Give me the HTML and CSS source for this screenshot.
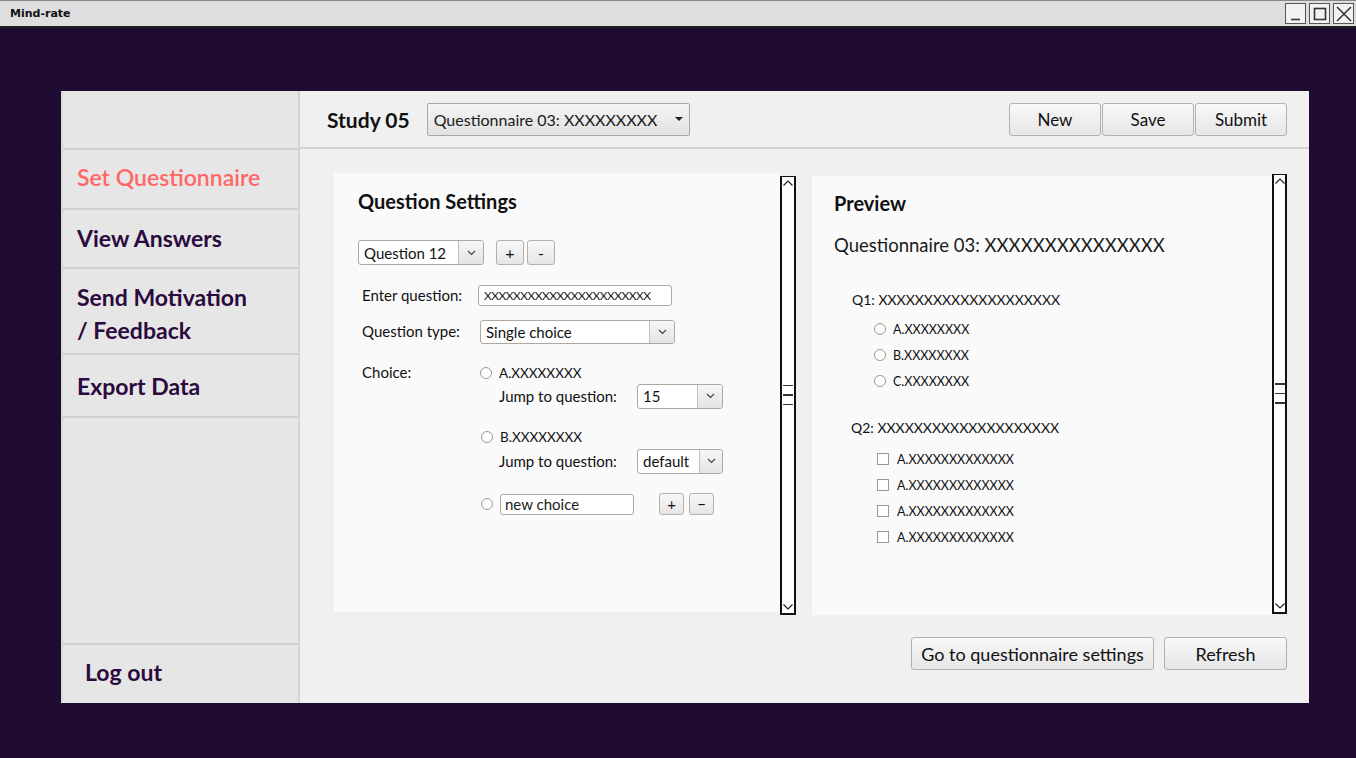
FILE: index.html
```html
<!DOCTYPE html>
<html>
<head>
<meta charset="utf-8">
<link rel="stylesheet" href="styles.css">
</head>
<body>
<div class="titlebar">
  <span class="app-name">Mind-rate</span>
  <div class="win-btns">
    <span class="win-btn"><svg width="18" height="18" viewBox="0 0 18 18"><path d="M4 14.5h9" stroke="#333" stroke-width="1.6" fill="none"/></svg></span>
    <span class="win-btn"><svg width="18" height="18" viewBox="0 0 18 18"><rect x="3.5" y="3.5" width="11" height="11" stroke="#333" stroke-width="1.6" fill="none"/></svg></span>
    <span class="win-btn"><svg width="18" height="18" viewBox="0 0 18 18"><path d="M2 2L16 16M16 2L2 16" stroke="#333" stroke-width="1.5" fill="none"/></svg></span>
  </div>
</div>
<div class="desktop">
  <div class="window">
    <aside class="sidebar">
      <div class="side-head"></div>
      <div class="side-item active">Set Questionnaire</div>
      <div class="side-item">View Answers</div>
      <div class="side-item tall">Send Motivation<br>/ Feedback</div>
      <div class="side-item export">Export Data</div>
      <div class="side-spacer"></div>
      <div class="side-item logout">Log out</div>
    </aside>
    <main class="main">
      <header class="main-head">
        <span class="study">Study 05</span>
        <div class="combo big">
          <span>Questionnaire 03: XXXXXXXXX</span>
          <svg class="tri" width="8" height="5" viewBox="0 0 8 5"><path d="M0 0h8L4 4z" fill="#222"/></svg>
        </div>
        <div class="head-actions">
          <button class="btn top">New</button>
          <button class="btn top">Save</button>
          <button class="btn top">Submit</button>
        </div>
      </header>
      <section class="content">
        <div class="panes">
          <div class="pane-wrap left">
            <div class="pane settings">
              <h2 class="pane-title">Question Settings</h2>
              <div class="row qsel">
                <div class="select w126">
                  <span class="sel-val">Question 12</span>
                  <span class="sel-arrow"><svg width="9" height="6" viewBox="0 0 9 6"><path d="M1 1l3.5 3.5L8 1" stroke="#444" stroke-width="1.2" fill="none"/></svg></span>
                </div>
                <button class="btn sq">+</button>
                <button class="btn sq">-</button>
              </div>
              <div class="form">
                <div class="lbl l-enter">Enter question:</div>
                <div class="f-enter"><div class="input w194 xs">XXXXXXXXXXXXXXXXXXXXXXX</div></div>
                <div class="lbl l-type">Question type:</div>
                <div class="f-type">
                  <div class="select w195 h24">
                    <span class="sel-val">Single choice</span>
                    <span class="sel-arrow"><svg width="9" height="6" viewBox="0 0 9 6"><path d="M1 1l3.5 3.5L8 1" stroke="#444" stroke-width="1.2" fill="none"/></svg></span>
                  </div>
                </div>
                <div class="lbl l-choice">Choice:</div>
                <div class="choices">
                  <div class="opt"><span class="radio"></span><span class="opt-text">A.XXXXXXXX</span></div>
                  <div class="jump j1">
                    <span class="jump-lbl">Jump to question:</span>
                    <div class="select w86">
                      <span class="sel-val">15</span>
                      <span class="sel-arrow"><svg width="9" height="6" viewBox="0 0 9 6"><path d="M1 1l3.5 3.5L8 1" stroke="#444" stroke-width="1.2" fill="none"/></svg></span>
                    </div>
                  </div>
                  <div class="opt b"><span class="radio"></span><span class="opt-text">B.XXXXXXXX</span></div>
                  <div class="jump j2">
                    <span class="jump-lbl">Jump to question:</span>
                    <div class="select w86">
                      <span class="sel-val">default</span>
                      <span class="sel-arrow narrow"><svg width="9" height="6" viewBox="0 0 9 6"><path d="M1 1l3.5 3.5L8 1" stroke="#444" stroke-width="1.2" fill="none"/></svg></span>
                    </div>
                  </div>
                  <div class="opt new">
                    <span class="radio"></span>
                    <div class="input w134">new choice</div>
                    <button class="btn sm">+</button>
                    <button class="btn sm">−</button>
                  </div>
                </div>
              </div>
            </div>
            <div class="scroll l">
              <svg class="sc-up" width="12" height="8" viewBox="0 0 12 8"><path d="M1.5 6.5L6 2l4.5 4.5" stroke="#222" stroke-width="1.2" fill="none"/></svg>
              <div class="grip"><i></i><i></i><i></i></div>
              <svg class="sc-down" width="12" height="8" viewBox="0 0 12 8"><path d="M1.5 1.5L6 6l4.5-4.5" stroke="#222" stroke-width="1.2" fill="none"/></svg>
            </div>
          </div>
          <div class="pane-wrap right">
            <div class="pane preview">
              <h2 class="pane-title">Preview</h2>
              <div class="pv-title">Questionnaire 03: XXXXXXXXXXXXXXX</div>
              <div class="pv-q">Q1: XXXXXXXXXXXXXXXXXXXX</div>
              <div class="pv-opt"><span class="radio"></span><span>A.XXXXXXXX</span></div>
              <div class="pv-opt"><span class="radio"></span><span>B.XXXXXXXX</span></div>
              <div class="pv-opt"><span class="radio"></span><span>C.XXXXXXXX</span></div>
              <div class="pv-q q2">Q2: XXXXXXXXXXXXXXXXXXXX</div>
              <div class="pv-opt chk"><span class="check"></span><span>A.XXXXXXXXXXXXX</span></div>
              <div class="pv-opt chk"><span class="check"></span><span>A.XXXXXXXXXXXXX</span></div>
              <div class="pv-opt chk"><span class="check"></span><span>A.XXXXXXXXXXXXX</span></div>
              <div class="pv-opt chk"><span class="check"></span><span>A.XXXXXXXXXXXXX</span></div>
            </div>
            <div class="scroll r">
              <svg class="sc-up" width="12" height="8" viewBox="0 0 12 8"><path d="M1.5 6.5L6 2l4.5 4.5" stroke="#222" stroke-width="1.2" fill="none"/></svg>
              <div class="grip"><i></i><i></i><i></i></div>
              <svg class="sc-down" width="12" height="8" viewBox="0 0 12 8"><path d="M1.5 1.5L6 6l4.5-4.5" stroke="#222" stroke-width="1.2" fill="none"/></svg>
            </div>
          </div>
        </div>
        <div class="footer">
          <button class="btn foot wide">Go to questionnaire settings</button>
          <button class="btn foot">Refresh</button>
        </div>
      </section>
    </main>
  </div>
</div>
</body>
</html>
```

FILE: styles.css
```css
* { box-sizing: border-box; }
html, body { margin: 0; padding: 0; }
body {
  width: 1356px;
  height: 758px;
  background: #1f0b31;
  font-family: "Lato", "Open Sans", sans-serif;
  color: #111;
  overflow: hidden;
}
.titlebar {
  height: 28px;
  background: #dedede;
  border-top: 1px solid #888;
  border-bottom: 2px solid #222;
  display: flex;
  align-items: center;
  justify-content: space-between;
  padding-left: 10px;
}
.app-name {
  font-family: "DejaVu Sans", sans-serif;
  font-weight: bold;
  font-size: 11px;
  color: #111;
}
.win-btns { display: flex; gap: 3px; padding-right: 2px; }
.win-btn {
  width: 21px; height: 21px;
  border: 1.5px solid #555;
  background: #f2f2f2;
  display: flex; align-items: center; justify-content: center;
}
.desktop {
  padding: 63px 0 0 61px;
}
.window {
  width: 1248px;
  height: 612px;
  display: flex;
  background: #f0f0f0;
}
.sidebar {
  width: 239px;
  background: #e6e6e6;
  border-left: 2px solid #d9d9d9;
  border-right: 2px solid #d4d4d4;
  display: flex;
  flex-direction: column;
}
.side-head { height: 59px; border-bottom: 2px solid #d0d0d0; }
.side-item {
  border-bottom: 2px solid #d0d0d0;
  padding-left: 14px;
  font-size: 23px;
  font-weight: 700;
  color: #2b0a3d;
  display: flex;
  align-items: center;
  height: 59px;
  line-height: 33px;
}
.side-item.active { color: #ff6666; font-weight: 600; height: 60px; padding-bottom: 3px; }
.side-item.tall { height: 86px; padding-top: 5px; }
.side-item.export { height: 63px; padding-top: 1px; }
.side-spacer { flex: 1; border-bottom: 2px solid #d0d0d0; }
.side-item.logout { border-bottom: none; height: 58px; padding-left: 22px; padding-bottom: 4px; }

.main { flex: 1; display: flex; flex-direction: column; }
.main-head {
  height: 58px;
  border-bottom: 2px solid #d4d4d4;
  display: flex;
  align-items: center;
  padding: 0 22px 0 27px;
}
.study { font-size: 21px; font-weight: 700; margin-right: 17px; color: #111; }
.combo {
  height: 33px;
  border: 1px solid #a8a8a8;
  border-radius: 2px;
  background: linear-gradient(#f4f4f4, #e2e2e2);
  display: flex;
  align-items: center;
  justify-content: space-between;
  padding: 0 6px 0 6px;
  font-size: 16px;
  color: #1a1a1a;
  font-weight: 400;
}
.combo.big { width: 263px; margin-top: 1px; }
.head-actions { margin-left: auto; display: flex; gap: 1px; margin-top: 1px; }
.btn {
  font-family: "Lato", "Open Sans", sans-serif;
  border: 1px solid #b8b0a6;
  border-radius: 3px;
  background: linear-gradient(#f8f8f8, #e6e6e6);
  color: #111;
  padding: 0;
  cursor: default;
}
.btn.top { width: 92px; height: 33px; font-size: 17px; }

.content { flex: 1; display: flex; flex-direction: column; padding: 24px 22px 0 34px; }
.panes { display: flex; gap: 16px; height: 442px; }
.pane-wrap { display: flex; }
.pane-wrap.left { width: 462px; }
.pane-wrap.right { width: 475px; }
.pane { background: #fafafa; height: 439px; }
.settings { width: 446px; padding: 14px 0 0 24px; }
.preview { width: 460px; margin-top: 3px; padding: 13px 0 0 22px; }
.pane-title { margin: 0; font-size: 20px; font-weight: 700; height: 28px; line-height: 28px; color: #111; }
.scroll {
  width: 16px;
  background: #fff;
  border: 2px solid #111;
  border-top-width: 1px;
  display: flex;
  flex-direction: column;
  align-items: center;
  justify-content: space-between;
  padding: 2px 0 2px;
}
.scroll.l { height: 439px; margin-top: 3px; }
.scroll.r { height: 440px; margin-top: 1px; width: 15px; }
.grip { display: flex; flex-direction: column; gap: 8px; }
.grip i { display: block; width: 10px; height: 1.5px; background: #333; }

.row.qsel { display: flex; align-items: center; margin-top: 25px; height: 25px; }
.select {
  display: flex;
  align-items: stretch;
  border: 1px solid #b0a89e;
  border-radius: 3px;
  background: #fff;
  height: 25px;
  overflow: hidden;
}
.sel-val { flex: 1; font-size: 15px; padding-left: 5px; display: flex; align-items: center; color: #111; }
.sel-arrow {
  width: 25px;
  border-left: 1px solid #c8c0b6;
  background: linear-gradient(#f6f6f6, #e4e4e4);
  display: flex; align-items: center; justify-content: center;
}
.sel-arrow.narrow { width: 23px; }
.w126 { width: 126px; }
.w195 { width: 195px; }
.h24 { height: 24px; }
.w86 { width: 86px; }
.btn.sq { width: 28px; height: 25px; font-size: 16px; margin-left: 12px; }
.btn.sq + .btn.sq { margin-left: 3px; }

.form {
  display: grid;
  grid-template-columns: 116px 1fr;
  margin-top: 20px;
  padding-left: 4px;
}
.lbl { font-size: 15px; color: #111; }
.l-enter, .f-enter { height: 35px; }
.l-enter { padding-top: 1px; }
.l-type, .f-type { height: 42px; }
.l-type { padding-top: 2px; }
.f-type { padding-left: 2px; }
.input {
  height: 21px;
  border: 1px solid #b0a89e;
  border-radius: 3px;
  background: #fff;
  font-size: 13px;
  padding-left: 6px;
  line-height: 19px;
  color: #222;
  overflow: hidden;
  white-space: nowrap;
}
.input.xs { font-size: 12px; letter-spacing: -0.55px; padding-left: 5px; }
.w194 { width: 194px; }
.l-choice { padding-top: 1px; }
.choices { display: flex; flex-direction: column; padding-top: 2px; padding-left: 2px; }
.opt { display: flex; align-items: center; height: 17px; font-size: 13.5px; color: #111; }
.opt.b { margin-top: 19px; margin-left: 1px; }
.radio {
  width: 12px; height: 12px;
  border: 1px solid #a09890;
  border-radius: 50%;
  background: #fff;
  display: inline-block;
  flex-shrink: 0;
}
.opt .radio { margin-right: 7px; }
.jump { display: flex; align-items: center; padding-left: 19px; height: 26px; }
.jump.j1 { margin-top: 2px; }
.jump.j2 { margin-top: 3px; }
.jump-lbl { font-size: 15px; width: 138px; color: #111; }
.opt.new { margin-top: 19px; height: 22px; margin-left: 1px; }
.opt.new .radio { margin-right: 7px; }
.w134 { width: 134px; font-size: 15px; padding-left: 4px; }
.btn.sm { width: 25px; height: 22px; font-size: 15px; margin-left: 25px; line-height: 18px; }
.btn.sm + .btn.sm { margin-left: 5px; }

.pv-title { font-size: 18.5px; font-weight: 400; margin-top: 17px; height: 28px; color: #1a1a1a; }
.pv-q { font-size: 14px; margin-top: 29px; padding-left: 18px; height: 20px; color: #111; font-weight: 400; }
.pv-q.q2 { margin-top: 25px; padding-left: 17px; }
.pv-opt { display: flex; align-items: center; padding-left: 40px; height: 26px; font-size: 12.5px; color: #111; }
.pv-q + .pv-opt { margin-top: 5px; }
.pv-opt .radio { margin-right: 7px; }
.pv-opt.chk { padding-left: 43px; }
.pv-q.q2 + .pv-opt { margin-top: 7px; }
.check {
  width: 12px; height: 12px;
  border: 1px solid #a09890;
  background: #fff;
  margin-right: 8px;
  display: inline-block;
}

.footer { display: flex; justify-content: flex-end; gap: 10px; margin-top: 22px; }
.btn.foot { width: 123px; height: 33px; font-size: 18px; }
.btn.foot.wide { width: 243px; }
```
